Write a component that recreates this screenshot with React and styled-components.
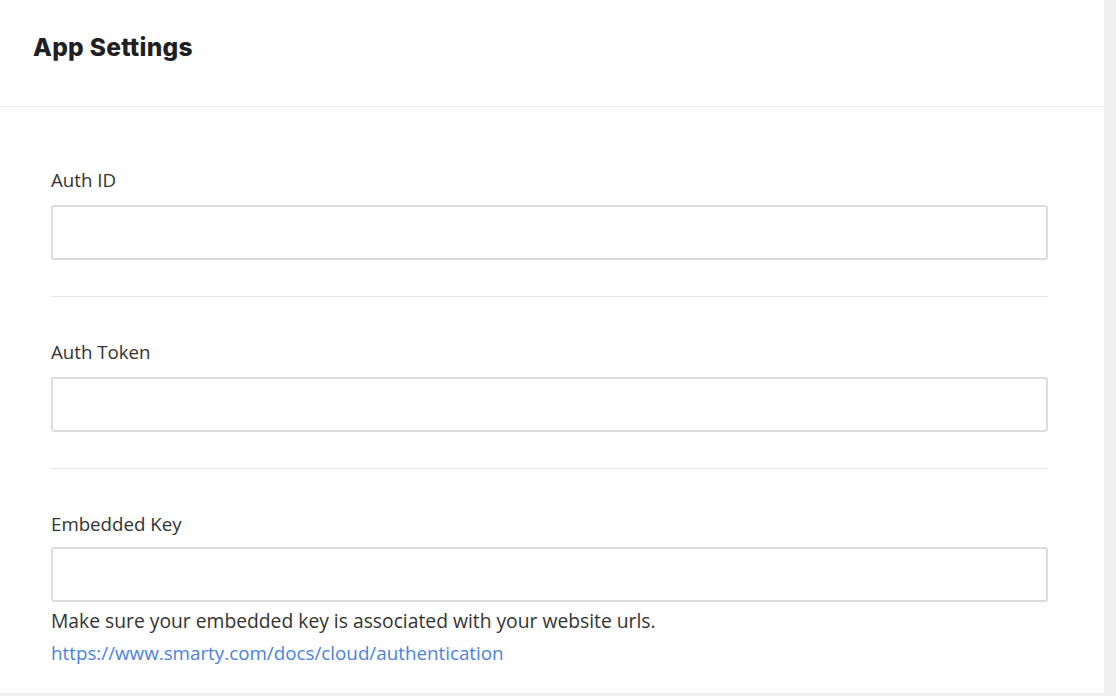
import React from 'react'
import styled, { createGlobalStyle } from 'styled-components'

const GlobalStyle = createGlobalStyle`
  html, body {
    margin: 0;
    padding: 0;
    background: #f0f0f0;
  }
  * {
    box-sizing: border-box;
  }
`;

const Page = styled.div`
  width: 1116px;
  height: 696px;
  padding-right: 12px;
  padding-bottom: 3px;
  background: #f0f0f0;
  overflow: hidden;
`;

const Card = styled.div`
  background: #fff;
  height: 100%;
  display: flex;
  flex-direction: column;
`;

const Header = styled.div`
  height: 107px;
  padding: 0 33px;
  display: flex;
  align-items: center;
  padding-bottom: 12px;
  border-bottom: 1px solid #ececec;
`;

const Title = styled.h1`
  margin: 0;
  font-family: Inter, "Liberation Sans", sans-serif;
  font-weight: 800;
  font-size: 24.5px;
  color: #1f1f24;
  letter-spacing: 0.3px;
`;

const Body = styled.div`
  padding: 62px 56px 0 51px;
`;

const Field = styled.div`
  padding-bottom: ${p => (p.last ? '0' : '36px')};
  border-bottom: ${p => (p.last ? 'none' : '1px solid #e6e6e6')};
  margin-bottom: ${p => (p.last ? '0' : '44px')};
`;

const Label = styled.label`
  display: block;
  font-family: "Open Sans", "Liberation Sans", sans-serif;
  font-size: 18.7px;
  color: #333;
  line-height: 22px;
  margin-bottom: ${p => (p.tight ? '12px' : '14px')};
`;

const Input = styled.input`
  display: block;
  width: 100%;
  height: 55px;
  border: 2px solid #dcdcdc;
  border-radius: 3px;
  background: #fff;
  outline: none;
  font-size: 16px;
  padding: 0 12px;
`;

const Help = styled.p`
  margin: 6px 0 0;
  font-family: "Open Sans", "Liberation Sans", sans-serif;
  font-size: 19.3px;
  line-height: 26px;
  color: #333;
`;

const DocLink = styled.a`
  display: block;
  margin-top: 6px;
  font-family: "Open Sans", "Liberation Sans", sans-serif;
  font-size: 18.8px;
  line-height: 26px;
  color: #4a82e0;
  text-decoration: none;
`;

const fields = ['Auth ID', 'Auth Token', 'Embedded Key'];

const App = () => {
  return (
    <>
      <GlobalStyle />
      <Page>
        <Card>
          <Header>
            <Title>App Settings</Title>
          </Header>
          <Body>
            {fields.map((name, i) => {
              const last = i === fields.length - 1;
              return (
                <Field key={name} last={last}>
                  <Label tight={last}>{name}</Label>
                  <Input type="text" />
                  {last && (
                    <>
                      <Help>Make sure your embedded key is associated with your website urls.</Help>
                      <DocLink href="https://www.smarty.com/docs/cloud/authentication">
                        https://www.smarty.com/docs/cloud/authentication
                      </DocLink>
                    </>
                  )}
                </Field>
              );
            })}
          </Body>
        </Card>
      </Page>
    </>
  )
}

export default App
